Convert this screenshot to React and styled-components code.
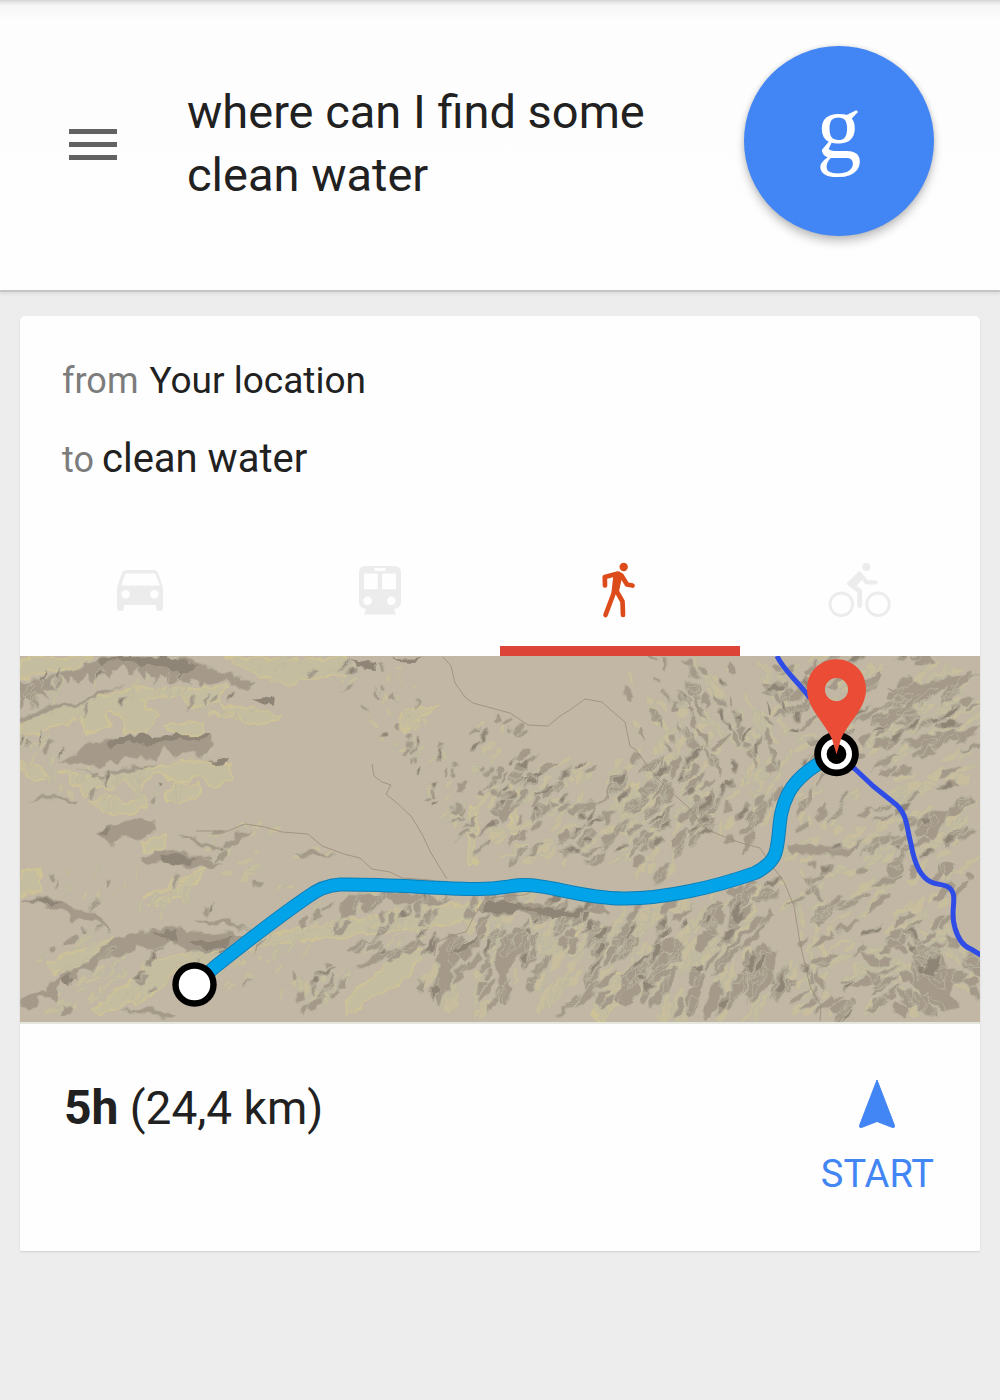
import React from "react";
import styled, { createGlobalStyle } from "styled-components";

const GlobalStyle = createGlobalStyle`
  * { box-sizing: border-box; }
  html { min-height: 100%; background: #ededed; }
  body {
    margin: 0;
    background: #ededed;
    color: #212121;
    font-family: Roboto, "Liberation Sans", sans-serif;
  }
  button {
    margin: 0;
    padding: 0;
    border: 0;
    background: none;
    color: inherit;
    font: inherit;
    cursor: pointer;
  }
  h1, p { margin: 0; font-weight: 400; }
  svg { display: block; }
`;

const Header = styled.header`
  display: flex;
  align-items: center;
  padding: 46px 66px 54px 69px;
  border-bottom: 2px solid #c6c6c6;
  background: linear-gradient(#d4d4d4 0, #ececec 3px, #f7f7f7 6px, #fdfdfd 20px, #fefefe 100%);
  box-shadow: 0 2px 3px #dcdcdc;
`;

const MenuButton = styled.button`
  display: grid;
  gap: 8px;
  width: 48px;
  padding-top: 6px;
  flex: none;
`;

const MenuBar = styled.span`
  height: 5px;
  background: #626262;
`;

const Query = styled.h1`
  flex: 1;
  min-width: 0;
  padding: 4px 70px 0;
  font-size: 47px;
  line-height: 63px;
`;

const VoiceButton = styled.button`
  display: grid;
  place-items: center;
  flex: none;
  width: 190px;
  height: 190px;
  border-radius: 50%;
  background: #4285f4;
  box-shadow: 0 6px 10px rgba(0, 0, 0, 0.22), 0 0 5px rgba(0, 0, 0, 0.12);
  color: #fff;
  font-family: "Liberation Serif", serif;
  font-size: 90px;
  line-height: 128px;
  padding-bottom: 26px;
`;

const Card = styled.main`
  margin: 24px 20px;
  overflow: hidden;
  border-radius: 5px 5px 0 0;
  background: #fefefe;
  box-shadow: 0 1px 2px #d0d0d0;
`;

const Places = styled.section`
  padding: 26px 42px 24px;
`;

const Place = styled.p`
  display: flex;
  align-items: baseline;
  gap: ${(p) => p.$gap}px;
  font-size: ${(p) => p.$size}px;
  line-height: 78px;
`;

const PlaceLabel = styled.span`
  color: #7c7c7c;
  font-size: 36px;
`;

const Modes = styled.nav`
  display: grid;
  grid-template-columns: repeat(4, 1fr);
`;

const Mode = styled.button`
  display: grid;
  justify-content: center;
  padding: 35px 0 24px;
  border-bottom: 10px solid ${(p) => (p.$active ? "#db4437" : "transparent")};
  color: ${(p) => (p.$active ? "#dd4b1b" : "#ececec")};
`;

const MapDrawing = styled.svg`
  width: 100%;
  height: auto;
  border-bottom: 2px solid #e3e6dc;
`;

const Summary = styled.footer`
  display: flex;
  align-items: flex-start;
  justify-content: space-between;
  padding: 52px 46px 56px 44px;
`;

const Duration = styled.p`
  font-size: 46px;
  line-height: 63px;
`;

const Hours = styled.b`
  font-size: 48px;
`;

const StartButton = styled.button`
  display: grid;
  justify-items: center;
  gap: 24px;
  padding-top: 3px;
  color: #4285f4;
  font-size: 38px;
  line-height: 42px;
`;

const modes = [
  {
    name: "Driving",
    art: (
      <g fill="currentColor">
        <path fillRule="evenodd" d="M19 12H46Q49 12 50 15L55 29V50Q55 53 51.500 53Q48 53 48 50V47H16V50Q16 53 12.500 53Q9 53 9 50V29L14 15Q15 12 19 12ZM17.500 15.500 13 27.500H52L47 15.500ZM17.700 32A4.300 4.300 0 1 0 17.700 40.600A4.300 4.300 0 1 0 17.700 32ZM46.300 32A4.300 4.300 0 1 0 46.300 40.600A4.300 4.300 0 1 0 46.300 32Z" />
      </g>
    ),
  },
  {
    name: "Transit",
    art: (
      <path
        fill="currentColor"
        fillRule="evenodd"
        d="M18 8H46Q53 8 53 15V44Q53 50 46 51L48 56.500H16L18 51Q11 50 11 44V15Q11 8 18 8ZM26.500 10V13H37.500V10ZM16 15.500V31.300H29.700V15.500ZM34 15.500V31.300H48V15.500ZM19.700 38.400A4.300 4.300 0 1 0 19.700 47A4.300 4.300 0 1 0 19.700 38.400ZM43.300 38.400A4.300 4.300 0 1 0 43.300 47A4.300 4.300 0 1 0 43.300 38.400Z"
      />
    ),
  },
  {
    name: "Walking",
    active: true,
    art: (
      <g fill="none" stroke="currentColor" strokeWidth="4.700" strokeLinecap="round" strokeLinejoin="round">
        <circle cx="35.700" cy="9" r="4.200" fill="currentColor" stroke="none" />
        <path d="M17 27.500 16.800 19 30 15.500 33.500 17.500 39 26.500 44.500 27.500" />
        <path d="M26.500 33 17.500 57M28.500 33 34.500 43.500 35 57" />
        <path d="M27 16 33 17.500 29.500 33 25 34Z" fill="currentColor" strokeWidth="3" />
      </g>
    ),
  },
  {
    name: "Cycling",
    art: (
      <g fill="none" stroke="currentColor" strokeLinecap="round" strokeLinejoin="round">
        <circle cx="13.300" cy="46.300" r="11.300" strokeWidth="2.800" />
        <circle cx="50" cy="46.300" r="11.300" strokeWidth="2.800" />
        <circle cx="38.300" cy="9" r="3.900" fill="currentColor" stroke="none" />
        <path d="M22 25.300 31.500 15.500 38.700 24.300H47.500" strokeWidth="4.200" />
        <path d="M21.500 25.500 31.700 33V47.500" strokeWidth="4.800" />
        <path d="M22 24 31 15 35 19 28 27Z" fill="currentColor" strokeWidth="2" />
      </g>
    ),
  },
];

function randomFrom(seed) {
  let s = seed;
  return () => {
    s = (s * 1664525 + 1013904223) % 4294967296;
    return s / 4294967296;
  };
}

function blob(rand, x, y, len, wid, deg) {
  const a = (deg * Math.PI) / 180;
  const pts = [];
  for (let i = 0; i < 9; i++) {
    const t = (i / 9) * Math.PI * 2;
    const k = 0.65 + rand() * 0.6;
    const u = Math.cos(t) * len * 0.5 * k;
    const v = Math.sin(t) * wid * 0.5 * k;
    pts.push(
      (x + u * Math.cos(a) - v * Math.sin(a)).toFixed(1) +
        " " +
        (y + u * Math.sin(a) + v * Math.cos(a)).toFixed(1)
    );
  }
  return "M" + pts.join("L") + "Z";
}

// Each slope field: centre, radii, tilt of the area, tilt of its streaks, count, streak length, streak width.
const slopes = [
  [60, 35, 62, 22, 0, -65, 20, 16, 4],
  [95, 132, 75, 22, 5, -80, 26, 14, 4],
  [185, 38, 60, 18, 15, -60, 16, 13, 4],
  [20, 90, 30, 18, 0, -70, 18, 15, 4],
  [285, 14, 60, 18, 8, -30, 18, 12, 4],
  [250, 200, 65, 34, 5, -25, 22, 14, 5],
  [110, 235, 90, 20, 8, -70, 24, 14, 4],
  [60, 290, 60, 22, -25, -40, 18, 14, 5],
  [110, 320, 85, 24, -25, -40, 34, 16, 6],
  [230, 305, 70, 22, -15, -45, 28, 15, 5],
  [360, 255, 80, 18, -6, -60, 36, 15, 6],
  [350, 300, 80, 20, -30, -40, 34, 18, 5],
  [295, 330, 40, 24, 0, -70, 16, 18, 6],
  [375, 50, 30, 42, -15, 60, 26, 9, 5],
  [415, 120, 55, 24, 55, -60, 30, 11, 5],
  [475, 105, 45, 42, 40, -45, 36, 14, 6],
  [505, 165, 80, 46, 12, -40, 78, 17, 6],
  [575, 155, 75, 48, 20, -40, 70, 20, 7],
  [635, 155, 55, 66, -10, -55, 76, 24, 8],
  [690, 130, 70, 66, 20, -55, 76, 22, 7],
  [650, 45, 45, 52, 0, 60, 38, 15, 6],
  [720, 55, 60, 60, 20, 58, 72, 18, 6],
  [850, 48, 105, 58, 0, -35, 110, 24, 7],
  [910, 75, 54, 65, 0, -28, 56, 26, 7],
  [780, 135, 50, 42, 0, -55, 34, 17, 7],
  [855, 165, 45, 38, 0, -30, 32, 15, 6],
  [910, 195, 50, 75, 0, -45, 54, 22, 9],
  [810, 215, 100, 34, -10, -25, 46, 22, 7],
  [520, 265, 85, 28, 8, -60, 60, 20, 8],
  [470, 310, 80, 46, 0, -65, 58, 26, 9],
  [580, 310, 75, 48, 0, -52, 56, 30, 8],
  [670, 275, 80, 38, -10, -55, 70, 28, 9],
  [690, 325, 80, 40, 0, -68, 56, 32, 10],
  [850, 285, 75, 48, 0, -35, 50, 24, 7],
  [905, 315, 60, 46, 0, 40, 64, 20, 11],
  [820, 335, 55, 28, 0, -40, 28, 22, 7],
  [790, 275, 14, 80, 0, 80, 22, 17, 7],
];

function buildSlopes() {
  const rand = randomFrom(4211);
  const out = { shade: "", deep: "", light: "" };
  slopes.forEach(([cx, cy, rx, ry, tilt, deg, n, len, wid]) => {
    const t = (tilt * Math.PI) / 180;
    for (let i = 0; i < n; i++) {
      const r = Math.sqrt(rand());
      const q = rand() * Math.PI * 2;
      const u = Math.cos(q) * rx * r;
      const v = Math.sin(q) * ry * r;
      const x = cx + u * Math.cos(t) - v * Math.sin(t);
      const y = cy + u * Math.sin(t) + v * Math.cos(t);
      const d = deg + (rand() - 0.5) * 30;
      const l = len * (0.5 + rand() * 0.9);
      const w = wid * (0.6 + rand() * 0.8);
      const kind = rand();
      const warm = cx < 300 ? 0.3 : 0.5;
      if (kind < warm) out.shade += blob(rand, x, y, l, w, d);
      else out.light += blob(rand, x, y, l * 1.1, w, d);
      if (kind < 0.1) out.deep += blob(rand, x, y, l * 0.5, w * 0.6, d);
    }
  });
  return out;
}

const texture = buildSlopes();

const lightAreas =
  "M0 2H72L55 12 30 15 0 23ZM0 66 35 50 75 43 105 34 205 31 199 45 175 51 160 40 120 45 138 58 125 78 105 76 100 56 85 58 90 70 65 78 62 62 52 60 50 70 35 68 18 78 0 76Z" +
  "M207 2H326V20L288 22 270 30 235 18ZM200 48 245 56 262 58 250 68 225 67 215 58ZM145 70 184 66 180 78 155 79ZM187 57 218 59 216 62 188 60Z" +
  "M38 114 65 121 125 113 180 103 210 110 212 125 190 132 178 120 155 128 140 118 128 122 120 138 100 124 92 135 80 128 66 140Z" +
  "M70 145 92 140 110 146 122 138 128 150 115 158 85 157ZM148 135 160 126 178 128 178 140 160 146 146 144Z" +
  "M0 105 20 110 28 122 15 125 0 116ZM122 187 145 178 142 190 122 197ZM0 218 20 210 20 235 0 240Z" +
  "M125 240 160 222 185 213 170 235 140 250 128 250 158 234 168 222 140 236ZM30 305 60 295 95 280 70 303 35 318ZM130 305 150 302 175 292 200 298 185 322 175 310 150 320 130 340 85 358 72 354 105 330Z" +
  "M225 285 270 273 325 265 405 251 460 247 450 264 400 271 330 281 260 287 230 295ZM328 340 360 315 385 294 410 292 390 318 350 345 325 360Z" +
  "M380 60 400 50 416 52 395 65 385 78ZM450 150 458 150 455 210 448 210ZM490 152 498 150 496 178 490 178Z" +
  "M590 320 605 315 600 345 585 362 573 362ZM605 130 620 125 622 158 605 164ZM545 285 562 270 550 295 525 306Z";

const shadeAreas =
  "M0 26 22 23 40 16 60 13 78 3 100 1 165 2 185 11 210 19 236 28 228 34 202 26 180 30 174 22 168 29 160 24 150 27 140 18 137 27 128 15 124 24 115 10 112 18 105 11 94 12 88 23 79 18 72 26 66 17 60 28 52 20 47 30 40 19 31 25 36 35 24 32 28 45 15 34 19 50 8 43 0 54Z" +
  "M39 107 58 97 68 89 86 83 108 80 190 80 194 89 182 101 165 95 157 100 146 94 137 105 128 99 119 105 105 101 98 108 88 106 78 112 60 105Z" +
  "M0 62 26 50 62 45 78 36 105 28 82 39 64 48 28 55 10 64 0 65ZM57 112 82 119 105 112 137 109 110 117 83 122Z" +
  "M77 178 90 169 115 164 134 166 136 175 122 182 101 183 90 187Z" +
  "M121 205 136 193 150 192 175 200 202 207 188 212 165 211 147 206 127 208Z" +
  "M157 182 174 181 195 191 206 190 215 178 232 176 220 184 212 193 192 194 177 187Z" +
  "M276 198 290 194 316 199 290 201ZM8 146 20 138 40 139 54 143 53 147 38 142 21 142Z" +
  "M2 246 17 239 34 240 48 249 76 257 94 276 86 273 75 264 52 263 40 255 20 247Z" +
  "M0 342 26 334 42 318 72 302 91 284 120 276 153 270 190 278 214 275 226 284 207 290 187 297 164 294 151 284 134 296 116 292 103 303 90 299 75 313 58 313 56 326 42 324 35 348 22 341 8 355 0 352Z" +
  "M173 264 194 266 209 263 222 271 234 276 213 270 190 271ZM100 355 124 352 148 356 156 362 130 360Z" +
  "M320 244 335 239 360 237 400 237 430 245 410 250 395 246 378 250 365 243 350 255 338 247 335 260 320 262Z" +
  "M334 312 358 296 380 293 400 283 405 286 390 296 366 301 348 309Z" +
  "M457 252 470 244 495 243 520 249 548 253 580 247 588 260 571 256 555 265 536 260 519 266 498 256 475 260Z" +
  "M418 300 428 278 437 282 445 292 460 277 466 279 452 298 442 309 435 296 433 320 425 335 420 350 414 338Z" +
  "M481 284 500 275 512 287 499 298 486 319 490 340 480 348 478 325 474 303ZM608 310 620 302 632 300 620 319 618 338 606 352 595 344Z" +
  "M473 152 492 135 494 150 486 166ZM548 153 565 144 580 145 575 155 552 158ZM584 184 596 168 605 166 595 185 580 198Z" +
  "M702 298 718 282 736 260 750 263 731 274 711 294 704 312 690 322ZM729 320 742 286 757 294 754 330 738 319 728 348Z" +
  "M705 233 720 228 735 238 719 257 710 243ZM896 165 920 153 934 157 922 166 915 183 899 180ZM766 188 830 191 845 182 826 201 770 197Z" +
  "M868 32 903 26 940 20 960 19 930 31 910 38 887 49ZM850 66 880 50 892 53 866 73ZM883 84 920 77 958 76 927 87 895 91Z" +
  "M896 291 912 296 926 312 942 318 930 337 940 351 922 354 907 341 891 330Z";

const deepAreas =
  "M76 5 100 1 153 2 180 11 160 16 142 10 120 10 98 4 83 10ZM85 88 101 80 190 79 188 83 155 84 128 88 110 86 91 90Z" +
  "M233 43 250 40 253 49 243 47ZM190 104 205 102 202 110ZM80 177 90 171 88 180ZM138 200 155 197 178 203 160 209 140 206Z" +
  "M10 242 28 241 43 248 26 248ZM42 322 52 316 50 328ZM130 279 155 273 158 285 144 282ZM169 286 190 286 215 280 204 290 183 293Z" +
  "M330 3 355 8 356 14 340 12ZM374 1 402 2 395 5 379 4ZM462 255 470 246 498 246 515 253 548 255 569 251 557 260 532 262 513 256 481 256Z" +
  "M434 295 454 282 459 281 447 294ZM514 140 530 130 528 136ZM508 119 520 114 524 118ZM909 300 919 303 915 321 906 318Z";

const trails = [
  "M423 1 431 10 435 27 445 41 453 47 475 53 490 57 508 69 528 70 540 60 550 54 565 43 582 46 592 55 605 66 610 90 616 94 624 105 636 121 650 135 668 151 686 173 700 179 718 186 740 192 750 207 764 226 774 250 780 287 790 330 801 350 800 365",
  "M176 175 208 175 225 168 245 171 262 176 288 178 302 190 324 198 340 202 352 213 370 216 382 222 410 224 428 229",
  "M352 108 354 120 362 126 371 129 366 138 378 148 391 160 402 178 411 197 427 223",
  "M414 300 417 286 430 280 446 276 454 260 465 243 485 240 504 239 516 234",
];

const routePath =
  "M175 328 196 310 C230 283 260 260 286 242 Q303 229 320 228.500 C365 228 410 232 453 233 C482 234 486 229 505 229 C532 229 560 242 603 242.500 C645 243 695 231 735 217 Q753 208 756 195 C761 175 757 160 768 138 Q779 116 816 98";

const riverPath =
  "M757 0C764 15 775 22 790 42M817 98 835 113 853 130 873 146C888 157 886 170 891 188 895 211 902 222 911 226 920 230 929 227 933 237 936 246 930 257 935 272 939 286 945 291 951 293L961 299";

function TerrainMap() {
  return (
    <MapDrawing viewBox="0 0 960 366" role="img" aria-label="Walking route over hilly terrain to a river">
      <defs>
        <filter id="erode" x="0" y="0" width="960" height="366" filterUnits="userSpaceOnUse" colorInterpolationFilters="sRGB">
          <feTurbulence type="fractalNoise" baseFrequency="0.08" numOctaves="2" seed="7" />
          <feDisplacementMap in="SourceGraphic" scale="12" xChannelSelector="R" yChannelSelector="G" />
        </filter>
      </defs>
      <rect width="960" height="366" fill="#c2b6a4" />
      <g filter="url(#erode)" strokeLinejoin="round">
        <path d={lightAreas} fill="#c5bd9f" stroke="#cec297" strokeWidth="2" />
        <path d={texture.light} fill="#c8be9e" stroke="#bcb8a2" strokeWidth="1" />
        <path d={shadeAreas} fill="#a59a89" stroke="#b3ae9a" strokeWidth="1" />
        <path d={texture.shade} fill="#a59a89" stroke="#b5b09c" strokeWidth="1" />
        <path d={deepAreas + texture.deep} fill="#8f8576" />
      </g>
      <g fill="none" stroke="#998b7a" strokeWidth="0.800">
        {trails.map((d) => (
          <path key={d} d={d} />
        ))}
      </g>
      <path d={riverPath} fill="none" stroke="#2f4de6" strokeWidth="5" strokeLinejoin="round" />
      <path d={routePath} fill="none" stroke="#0b7fb8" strokeWidth="14" strokeLinejoin="round" />
      <path d={routePath} fill="none" stroke="#03a3ea" strokeWidth="12" strokeLinejoin="round" />
      <circle cx="174.500" cy="328.500" r="19" fill="#fff" stroke="#000" strokeWidth="6.400" />
      <circle cx="816.500" cy="98" r="22.300" fill="#000" />
      <circle cx="816.500" cy="98" r="12.700" fill="none" stroke="#fff" strokeWidth="5.600" />
      <path
        fill="#ea4c36"
        fillRule="evenodd"
        d="M816.500 3.300C833 3.300 846 16 846 33C846 53 829 65 821 83L816.500 98.500 812 83C804 65 787 53 787 33C787 16 800 3.300 816.500 3.300ZM816.500 22A11.600 11.600 0 1 0 816.500 45.200A11.600 11.600 0 1 0 816.500 22Z"
      />
    </MapDrawing>
  );
}

export default function App() {
  return (
    <>
      <GlobalStyle />
      <Header>
        <MenuButton type="button" aria-label="Menu">
          <MenuBar />
          <MenuBar />
          <MenuBar />
        </MenuButton>
        <Query>where can I find some clean water</Query>
        <VoiceButton type="button">g</VoiceButton>
      </Header>
      <Card>
        <Places>
          <Place $size={37} $gap={11}>
            <PlaceLabel>from</PlaceLabel>
            <span>Your location</span>
          </Place>
          <Place $size={40} $gap={8}>
            <PlaceLabel>to</PlaceLabel>
            <span>clean water</span>
          </Place>
        </Places>
        <Modes aria-label="Travel mode">
          {modes.map((m) => (
            <Mode key={m.name} type="button" aria-label={m.name} aria-pressed={!!m.active} $active={m.active}>
              <svg width="64" height="64" viewBox="0 0 64 64" aria-hidden="true">
                {m.art}
              </svg>
            </Mode>
          ))}
        </Modes>
        <TerrainMap />
        <Summary>
          <Duration>
            <Hours>5h</Hours> (24,4 km)
          </Duration>
          <StartButton type="button">
            <svg width="38" height="50" viewBox="0 0 38 50" aria-hidden="true">
              <path d="M19 1 36.500 46.500Q37 49 34.500 48.500L19 42.500 3.500 48.500Q1 49 1.500 46.500Z" fill="currentColor" stroke="currentColor" strokeLinejoin="round" />
            </svg>
            START
          </StartButton>
        </Summary>
      </Card>
    </>
  );
}
